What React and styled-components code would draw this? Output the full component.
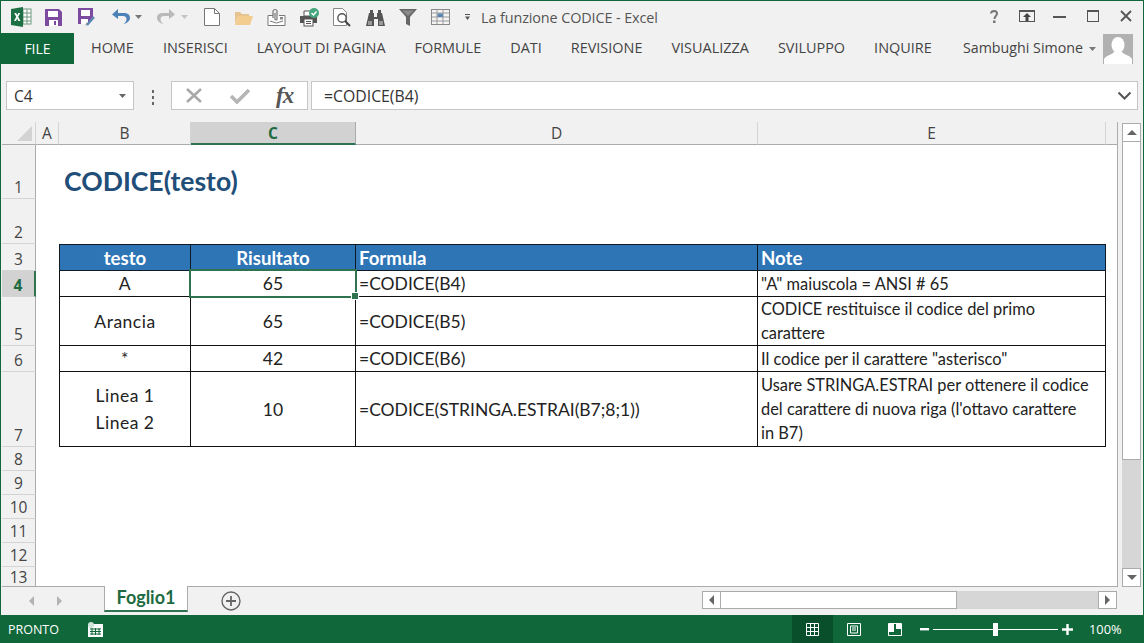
import React from 'react';
import styled, { createGlobalStyle } from 'styled-components';

const Global = createGlobalStyle`
  html, body { margin: 0; padding: 0; width: 1144px; height: 643px; overflow: hidden; background: #f1f1f1; }
  * { box-sizing: border-box; }
`;

const UI = `"Open Sans", "Noto Sans", sans-serif`;
const CELL = `Lato, "Open Sans", sans-serif`;
const GREEN = '#10673a';

const Window = styled.div`
  width: 1144px; height: 643px; display: flex; flex-direction: column;
  border-top: 1px solid ${GREEN}; border-left: 1px solid ${GREEN}; border-right: 1px solid ${GREEN}; padding-left: 1px;
  background: #f1f1f1; overflow: hidden;
  font-family: ${UI}; color: #444;
`;
const TitleBar = styled.div`
  height: 32px; flex: none; display: flex; align-items: center; position: relative;
`;
const Qat = styled.div`display: flex; align-items: center; margin-left: 9px; height: 100%;`;
const QatIcon = styled.svg`
  display: block; flex: none; margin-left: ${p => p.$ml || 0}px; width: ${p => p.width}px; height: ${p => p.height}px;
`;
const Title = styled.div`
  margin-left: 11px; font-size: 14.4px; color: #555; white-space: nowrap; letter-spacing: -0.1px;
`;
const Controls = styled.div`
  margin-left: auto; display: flex; align-items: center; height: 100%; padding-right: 11px; padding-bottom: 2px;
`;
const Ribbon = styled.div`height: 31px; flex: none; display: flex; align-items: center;`;
const FileTab = styled.div`
  width: 73px; margin-left: -1px; height: 31px; background: ${GREEN}; color: #fff; font-size: 14px; display: flex; align-items: center; justify-content: center; flex: none;
`;
const Tabs = styled.div`display: flex; margin-left: 2.5px; padding-bottom: 2px;`;
const Tab = styled.div`
  padding: 0 14.5px; font-size: 14.45px; color: #444; white-space: nowrap;
`;
const User = styled.div`
  margin-left: auto; display: flex; align-items: center; padding-right: 10px; font-size: 14.25px; color: #444;
`;
const UserName = styled.span`padding-bottom: 3px;`;
const Avatar = styled.svg`display: block; margin-left: 7px;`;
const FormulaZone = styled.div`
  height: 58px; flex: none; display: flex; align-items: flex-start; padding: 17px 5px 0 4px;
`;
const NameBox = styled.div`
  width: 128px; height: 29px; background: #fff; border: 1px solid #c6c6c6; display: flex; align-items: center; justify-content: space-between;
  padding: 0 7px; font-size: 15.5px; color: #333;
`;
const Dots = styled.div`
  width: 37px; display: flex; flex-direction: column; align-items: center; gap: 3px;
  span { width: 2px; height: 3px; background: #666; display: block; }
  padding-top: 9px;
`;
const FxBox = styled.div`
  width: 137px; height: 29px; background: #fff; border: 1px solid #c6c6c6; display: flex; align-items: center; padding-left: 13px;
`;
const Fx = styled.span`
  font-family: "Liberation Serif", serif; font-style: italic; font-weight: 700; font-size: 23px; color: #555; margin-left: 26px; letter-spacing: -1px; line-height: 1;
`;
const FormulaInput = styled.div`
  flex: 1; margin-left: 3px; height: 29px; background: #fff; border: 1px solid #c6c6c6; display: flex; align-items: center; justify-content: space-between;
  padding: 0 5px 0 12px; font-size: 15.8px; color: #333;
`;
const SheetArea = styled.div`flex: 1; min-height: 0; display: flex;`;
const GridWrap = styled.div`
  width: 1116px; flex: none; overflow: hidden; background: #fff; border-right: 1px solid #ababab; border-bottom: 1px solid #ababab;
  position: relative;
`;
const Sheet = styled.div`
  display: grid; position: relative;
  grid-template-columns: 34px 23px 132px 165px 402px 348px 11px;
  grid-template-rows: 23px 54px 45px 27px 26px 49px 26px 75px repeat(5, 24px) 20px;
  font-family: ${CELL};
`;
const Corner = styled.div`
  background: #f1f1f1; border-bottom: 1px solid #ababab; border-right: 1px solid #d4d4d4; position: relative;
  &::after { content: ''; position: absolute; right: 3px; bottom: 3px; width: 0; height: 0; border-style: solid; border-width: 0 0 15px 15px; border-color: transparent transparent #d3d3d3 transparent; }
`;
const ColHead = styled.div`
  background: ${p => p.$active ? '#d2d2d2' : '#f1f1f1'};
  color: ${p => p.$active ? '#1e6b41' : '#444'};
  font-weight: ${p => p.$active ? 700 : 400};
  font-family: ${UI}; font-size: 15.5px;
  border-bottom: ${p => p.$active ? '2px solid #2f7350' : '1px solid #ababab'};
  border-right: 1px solid ${p => p.$active ? '#ababab' : '#d4d4d4'};
  display: flex; align-items: center; justify-content: center;
`;
const EmptyHead = styled.div`background: #f1f1f1; border-bottom: 1px solid #ababab;`;
const RowHead = styled.div`
  background: ${p => p.$active ? '#d2d2d2' : '#f1f1f1'};
  color: ${p => p.$active ? '#1e6b41' : '#444'};
  font-weight: ${p => p.$active ? 700 : 400};
  font-family: ${UI}; font-size: 15.5px;
  border-bottom: ${p => p.$last ? 'none' : '1px solid #d4d4d4'};
  border-right: ${p => p.$active ? '2px solid #2f7350' : '1px solid #ababab'};
  display: flex; align-items: flex-end; justify-content: center; padding-bottom: ${p => p.$last ? 0 : 1}px; line-height: ${p => p.$last ? 19 : 20}px;
`;
const Cell = styled.div`
  background: #fff;
  min-width: 0;
`;
const Title1 = styled.div`
  grid-column: span 2; background: #fff; display: flex; align-items: center; font-size: 26.6px; font-weight: 700; color: #1f4e79; padding-left: 5px; white-space: nowrap; padding-top: 17px;
`;
const Head = styled.div`
  background: #2e75b6; color: #fff; font-weight: 700; font-size: 18.6px; display: flex; align-items: center;
  justify-content: ${p => p.$left ? 'flex-start' : 'center'}; padding: ${p => p.$left ? '0 0 0 3px' : '0'};
  border: 1px solid #0f1a24; border-left: ${p => p.$first ? '1px solid #0f1a24' : 'none'}; white-space: nowrap;
`;
const Data = styled.div`
  background: #fff; color: #222; font-size: ${p => p.$small ? 16.4 : 17.5}px; line-height: ${p => p.$small ? 24 : 27}px;
  letter-spacing: ${p => p.$wide ? 0.5 : 0}px;
  display: flex; align-items: center; justify-content: ${p => p.$left ? 'flex-start' : 'center'}; text-align: ${p => p.$left ? 'left' : 'center'};
  padding-left: ${p => p.$left ? 3 : 0}px;
  border-bottom: 1px solid #111; border-right: 1px solid #111; border-left: ${p => p.$first ? '1px solid #111' : 'none'};
  white-space: nowrap;
`;
const Selection = styled.div`
  position: absolute; left: 187px; top: 147px; width: 168px; height: 29px; border: 2px solid #2f7350; pointer-events: none;
  &::after { content: ''; position: absolute; right: -4px; bottom: -4px; width: 6px; height: 6px; background: #2f7350; border: 1px solid #fff; }
`;
const VScroll = styled.div`
  flex: 1; display: flex; flex-direction: column; padding: 1px 3px 0 4px; background: #f1f1f1;
`;
const ScrollBtn = styled.div`
  flex: none; background: #fff; border: 1px solid #ababab; display: flex; align-items: center; justify-content: center;
  width: 19px; height: ${p => p.$h ? 18 : 19}px;
`;
const Arrow = styled.span`
  width: 0; height: 0; border-style: solid;
  ${p => p.$dir === 'up' && 'border-width: 0 5px 5px 5px; border-color: transparent transparent #666 transparent;'}
  ${p => p.$dir === 'down' && 'border-width: 5px 5px 0 5px; border-color: #666 transparent transparent transparent;'}
  ${p => p.$dir === 'left' && 'border-width: 5px 5px 5px 0; border-color: transparent #666 transparent transparent;'}
  ${p => p.$dir === 'right' && 'border-width: 5px 0 5px 5px; border-color: transparent transparent transparent #666;'}
`;
const VTrack = styled.div`flex: 1; background: #d6d6d6; min-height: 0;`;
const VThumb = styled.div`height: 318px; background: #fff; border: 1px solid #ababab; border-top: none;`;
const SheetBar = styled.div`
  height: 28px; flex: none; display: flex; align-items: flex-start; position: relative; background: #f1f1f1;
`;
const NavArrows = styled.div`
  width: 102px; height: 100%; display: flex; align-items: center; gap: 23px; padding-left: 27px;
  span { opacity: 0.45; }
`;
const SheetTab = styled.div`
  width: 84px; height: 26px; background: #fff; color: #1e6b41; font-family: ${CELL}; font-weight: 700; font-size: 18px;
  display: flex; align-items: center; justify-content: center; border-left: 1px solid #ababab; border-right: 1px solid #ababab;
  border-bottom: 2px solid #2f7350; padding-bottom: 3px; margin-top: -1px;
`;
const AddArea = styled.div`
  width: 514px; height: 100%; padding-left: 33px; padding-top: 4px;
`;
const HScroll = styled.div`
  width: 415px; height: 28px; display: flex; padding: 4px 0 0 0;
`;
const HTrack = styled.div`
  flex: 1; height: 18px; background: #d6d6d6; display: flex;
`;
const HThumb = styled.div`
  width: 236px; height: 18px; background: #fff; border: 1px solid #ababab; border-left: none;
`;
const Status = styled.div`
  height: 28px; flex: none; background: ${GREEN}; color: #fff; display: flex; align-items: center; font-size: 12.5px; margin-left: -2px; margin-right: -1px;
`;
const Ready = styled.div`margin-left: 8px; width: 80px;`;
const ViewBtn = styled.div`
  width: 41px; height: 28px; display: flex; align-items: center; justify-content: center;
  background: ${p => p.$active ? '#0a4f2b' : 'transparent'};
`;
const StatusRight = styled.div`margin-left: auto; display: flex; align-items: center; height: 100%;`;
const Zoom = styled.div`
  display: flex; align-items: center; margin-left: 5px; position: relative;
`;
const Slider = styled.div`
  width: 125px; height: 1px; background: #fff; margin: 0 4px; position: relative;
`;
const Knob = styled.div`
  position: absolute; left: 60px; top: -6px; width: 5px; height: 13px; background: #fff;
`;
const Percent = styled.div`margin-left: 16px; width: 55px; font-size: 12.8px;`;

const Save = ({ ml }) => (
  <QatIcon $ml={ml} width={17} height={17} viewBox="0 0 17 17">
    <path d="M0 0h14l3 3v14H0z" fill="#7c4b9f" />
    <rect x="3" y="2" width="10" height="6" fill="#fff" />
    <rect x="4" y="11" width="9" height="6" fill="#fff" />
    <rect x="9" y="12" width="2" height="4" fill="#7c4b9f" />
  </QatIcon>
);
const SaveAs = ({ ml }) => (
  <QatIcon $ml={ml} width={18} height={18} viewBox="0 0 18 18">
    <path d="M0 0h15v9l-5 7H0z" fill="#7c4b9f" />
    <rect x="3" y="2" width="9" height="6" fill="#fff" />
    <rect x="3" y="11" width="7" height="5" fill="#fff" />
    <path d="M9 17l7-8" stroke="#5b87b5" strokeWidth="2.4" />
    <path d="M8 17.5l1-3" stroke="#888" strokeWidth="1" />
  </QatIcon>
);
const Undo = ({ ml, color, flip }) => (
  <QatIcon $ml={ml} width={20} height={18} viewBox="0 0 20 18">
    <g transform={flip ? 'translate(20 0) scale(-1 1)' : undefined}>
      <path d="M7 1L1 6.5 7 11V8h5c2.5 0 3.5 1.5 3.5 3 0 2-1 3.6-3 5 3.5-.5 6.5-3 6.5-6.2C19 6.5 16.5 5 13 5H7z" fill={color} />
    </g>
  </QatIcon>
);
const Caret = ({ ml, color }) => (
  <QatIcon $ml={ml} width={7} height={4} viewBox="0 0 7 4"><path d="M0 0h7L3.5 4z" fill={color} /></QatIcon>
);

export default function App() {
  const rows = [
    ['A', '65', '=CODICE(B4)', '"A" maiuscola = ANSI # 65'],
    ['Arancia', '65', '=CODICE(B5)', <>CODICE restituisce il codice del primo<br />carattere</>],
    ['*', '42', '=CODICE(B6)', 'Il codice per il carattere "asterisco"'],
    [<>Linea 1<br />Linea 2</>, '10', '=CODICE(STRINGA.ESTRAI(B7;8;1))', <>Usare STRINGA.ESTRAI per ottenere il codice<br />del carattere di nuova riga (l'ottavo carattere<br />in B7)</>],
  ];
  return (
    <>
      <Global />
      <Window>
        <TitleBar>
          <Qat>
            <QatIcon width={21} height={20} viewBox="0 0 21 20">
              <rect x="8" y="2" width="12" height="15" fill="#fff" stroke="#6f9a80" />
              <path d="M12 2v15M16 2v15M8 6h12M8 10h12M8 14h12" stroke="#6f9a80" strokeWidth="1" />
              <path d="M0 2l12-2v20L0 18z" fill="#1d7044" />
              <path d="M3.2 6h2l1 2.3L7.3 6h2L7.2 9.8 9.4 14h-2l-1.2-2.6L5 14H3l2.2-4.2z" fill="#fff" />
            </QatIcon>
            <Save ml={13} />
            <SaveAs ml={16} />
            <Undo ml={15} color="#4d82b8" />
            <Caret ml={4} color="#777" />
            <Undo ml={14} color="#b9b9b9" flip />
            <Caret ml={5} color="#c4c4c4" />
            <QatIcon $ml={16} width={16} height={18} viewBox="0 0 16 18">
              <path d="M.5.5h10l5 5v12H.5z" fill="#fff" stroke="#777" />
              <path d="M10.5.5v5h5" fill="none" stroke="#777" />
            </QatIcon>
            <QatIcon $ml={14} width={19} height={15} viewBox="0 0 19 15">
              <path d="M1 2h5l2 2h7v2H4L1 14z" fill="#e6c48f" />
              <path d="M4 6h15l-3 9H1z" fill="#f3cd8f" />
            </QatIcon>
            <QatIcon $ml={14} width={19} height={19} viewBox="0 0 19 19">
              <path d="M1 7.500h5M12 7.500h6v10H1v-10" fill="#fff" stroke="#777" />
              <path d="M6 10V3.500a2 2 0 014 0V11a1 1 0 01-2 0V5" fill="none" stroke="#777" strokeWidth="1.2" />
              <path d="M3 13l6.500 2 6.500-2" fill="none" stroke="#777" />
              <rect x="13" y="9" width="3" height="2.500" fill="#888" />
            </QatIcon>
            <QatIcon $ml={14} width={20} height={19} viewBox="0 0 20 19">
              <path d="M4 3h7v5H4z" fill="#fff" stroke="#555" />
              <path d="M0 8h17v7H0z" fill="#555" />
              <rect x="4" y="11" width="9" height="7" fill="#fff" stroke="#555" />
              <path d="M6 13.500h5M6 15.500h5" stroke="#555" />
              <circle cx="14" cy="5" r="5" fill="#46a77e" />
              <path d="M11.500 5l2 2 3-3.500" fill="none" stroke="#fff" strokeWidth="1.4" />
            </QatIcon>
            <QatIcon $ml={13} width={18} height={19} viewBox="0 0 18 19">
              <path d="M.5.500h9l4 4v13H.5z" fill="#fff" stroke="#888" />
              <circle cx="9" cy="10" r="4.200" fill="#fff" stroke="#555" strokeWidth="1.4" />
              <path d="M12 13l5 5" stroke="#444" strokeWidth="2" />
            </QatIcon>
            <QatIcon $ml={15} width={19} height={17} viewBox="0 0 19 17">
              <path d="M4 1h3v3H4zM12 1h3v3h-3z" fill="#555" />
              <path d="M3 4h5v4h3V4h5l3 13h-7V10H8v7H0z" fill="#555" />
              <path d="M2 12h4v4H2zM13 12h4v4h-4z" fill="#999" />
            </QatIcon>
            <QatIcon $ml={14} width={18} height={17} viewBox="0 0 18 17">
              <path d="M0 0h18l-7 8v9l-4-2V8z" fill="#666" />
              <path d="M3 1.500h12L9 7z" fill="#8b8b8b" />
            </QatIcon>
            <QatIcon $ml={14} width={19} height={16} viewBox="0 0 19 16">
              <rect x=".5" y=".5" width="18" height="15" fill="#f4f4f4" stroke="#888" />
              <path d="M.5 4h18M.5 8h18M.5 12h18M6 .5v15M12 .5v15" stroke="#9a9a9a" />
              <rect x="6.500" y="4.500" width="5.500" height="3.500" fill="#5b87b5" />
            </QatIcon>
            <QatIcon $ml={15} width={5} height={6} viewBox="0 0 5 6">
              <path d="M0 0h5v1H0zM0 2.500h5L2.500 6z" fill="#555" />
            </QatIcon>
          </Qat>
          <Title>La funzione CODICE - Excel</Title>
          <Controls>
            <QatIcon width={8} height={13} viewBox="0 0 8 13">
              <path d="M1 3.500C1.200 1.800 2.500 1 4 1c1.800 0 3 1 3 2.600C7 5.800 4.500 6 4.500 9" fill="none" stroke="#777" strokeWidth="2" />
              <rect x="3" y="10.500" width="2.500" height="2.500" fill="#777" />
            </QatIcon>
            <QatIcon $ml={21} width={16} height={12} viewBox="0 0 16 12">
              <rect x=".5" y=".5" width="15" height="11" fill="none" stroke="#555" />
              <path d="M1 1.500h14" stroke="#555" />
              <path d="M8 3l4 4H9.500v4h-3V7H4z" fill="#444" />
            </QatIcon>
            <QatIcon $ml={18} width={13} height={3} viewBox="0 0 13 3"><rect width="13" height="2" y="1" fill="#555" /></QatIcon>
            <QatIcon $ml={21} width={12} height={12} viewBox="0 0 12 12">
              <rect x=".5" y=".5" width="11" height="11" fill="none" stroke="#555" />
              <rect x="0" y="0" width="12" height="2" fill="#555" />
            </QatIcon>
            <QatIcon $ml={21} width={12} height={12} viewBox="0 0 12 12">
              <path d="M1 1l10 10M11 1L1 11" stroke="#555" strokeWidth="1.800" />
            </QatIcon>
          </Controls>
        </TitleBar>
        <Ribbon>
          <FileTab>FILE</FileTab>
          <Tabs>
            {['HOME', 'INSERISCI', 'LAYOUT DI PAGINA', 'FORMULE', 'DATI', 'REVISIONE', 'VISUALIZZA', 'SVILUPPO', 'INQUIRE'].map(t => <Tab key={t}>{t}</Tab>)}
          </Tabs>
          <User>
            <UserName>Sambughi Simone</UserName>
            <Caret ml={6} color="#777" />
            <Avatar width={30} height={30} viewBox="0 0 30 30">
              <rect width="30" height="30" fill="#b1b1b1" />
              <ellipse cx="15" cy="11" rx="6.500" ry="8" fill="#fff" />
              <path d="M1 30v-5c2-4 8-4 10-7h8c2 3 8 3 10 7v5z" fill="#fff" />
            </Avatar>
          </User>
        </Ribbon>
        <FormulaZone>
          <NameBox>C4<Caret color="#666" /></NameBox>
          <Dots><span /><span /><span /></Dots>
          <FxBox>
            <QatIcon width={19} height={17} viewBox="0 0 19 17">
              <path d="M2 2l14 13M16 2L2 15" stroke="#a9a9a9" strokeWidth="2.600" />
            </QatIcon>
            <QatIcon $ml={26} width={20} height={17} viewBox="0 0 20 17">
              <path d="M1 9l6 6L19 3" fill="none" stroke="#b5b5b5" strokeWidth="3.600" />
            </QatIcon>
            <Fx>fx</Fx>
          </FxBox>
          <FormulaInput>=CODICE(B4)
            <QatIcon width={15} height={9} viewBox="0 0 15 9">
              <path d="M1.500 1.500l6 6 6-6" fill="none" stroke="#555" strokeWidth="2" />
            </QatIcon>
          </FormulaInput>
        </FormulaZone>
        <SheetArea>
          <GridWrap>
            <Sheet>
              <Corner />
              <ColHead>A</ColHead>
              <ColHead>B</ColHead>
              <ColHead $active>C</ColHead>
              <ColHead>D</ColHead>
              <ColHead>E</ColHead>
              <EmptyHead />

              <RowHead>1</RowHead>
              <Cell />
              <Title1>CODICE(testo)</Title1>
              <Cell /><Cell /><Cell />

              <RowHead>2</RowHead>
              <Cell /><Cell /><Cell /><Cell /><Cell /><Cell />

              <RowHead>3</RowHead>
              <Cell />
              <Head $first>testo</Head>
              <Head>Risultato</Head>
              <Head $left>Formula</Head>
              <Head $left>Note</Head>
              <Cell />

              {rows.map((r, i) => (
                <React.Fragment key={i}>
                  <RowHead $active={i === 0}>{i + 4}</RowHead>
                  <Cell />
                  <Data $first $wide>{r[0]}</Data>
                  <Data>{r[1]}</Data>
                  <Data $left>{r[2]}</Data>
                  <Data $left $small>{r[3]}</Data>
                  <Cell />
                </React.Fragment>
              ))}

              {[8, 9, 10, 11, 12, 13].map(n => (
                <React.Fragment key={n}>
                  <RowHead $last={n === 13}>{n}</RowHead>
                  <Cell /><Cell /><Cell /><Cell /><Cell /><Cell />
                </React.Fragment>
              ))}
              <Selection />
            </Sheet>
          </GridWrap>
          <VScroll>
            <ScrollBtn><Arrow $dir="up" /></ScrollBtn>
            <VTrack><VThumb /></VTrack>
            <ScrollBtn><Arrow $dir="down" /></ScrollBtn>
          </VScroll>
        </SheetArea>
        <SheetBar>
          <NavArrows><Arrow $dir="left" /><Arrow $dir="right" /></NavArrows>
          <SheetTab>Foglio1</SheetTab>
          <AddArea>
            <QatIcon width={20} height={20} viewBox="0 0 20 20">
              <circle cx="10" cy="10" r="9" fill="none" stroke="#666" strokeWidth="1.400" />
              <path d="M10 5v10M5 10h10" stroke="#666" strokeWidth="1.800" />
            </QatIcon>
          </AddArea>
          <HScroll>
            <ScrollBtn $h><Arrow $dir="left" /></ScrollBtn>
            <HTrack><HThumb /></HTrack>
            <ScrollBtn $h><Arrow $dir="right" /></ScrollBtn>
          </HScroll>
        </SheetBar>
        <Status>
          <Ready>PRONTO</Ready>
          <QatIcon width={15} height={15} viewBox="0 0 15 15">
            <path d="M0 2h15v13H0z" fill="#fff" />
            <path d="M2 7h11M2 9.500h11M2 12h11M4 6v7M7.500 6v7M11 6v7" stroke={GREEN} />
            <circle cx="3" cy="3" r="3" fill="#cfe3d6" />
          </QatIcon>
          <StatusRight>
            <ViewBtn $active>
              <QatIcon width={13} height={13} viewBox="0 0 13 13">
                <path d="M.5.5h12v12H.5zM.5 4.500h12M.5 8.500h12M4.500.5v12M8.500.5v12" fill="none" stroke="#fff" />
              </QatIcon>
            </ViewBtn>
            <ViewBtn>
              <QatIcon width={14} height={13} viewBox="0 0 14 13">
                <path d="M.5.5h13v12H.5z" fill="none" stroke="#fff" />
                <path d="M3.500 3h7v7h-7zM5 5h4M5 7h4" fill="none" stroke="#fff" />
              </QatIcon>
            </ViewBtn>
            <ViewBtn>
              <QatIcon width={14} height={13} viewBox="0 0 14 13">
                <path d="M.5.5h13v12H.5z" fill="none" stroke="#fff" />
                <path d="M1 1h5v8H1zM8 1h5v5H8z" fill="#fff" />
              </QatIcon>
            </ViewBtn>
            <Zoom>
              <QatIcon width={9} height={3} viewBox="0 0 9 3"><rect width="9" height="2.400" fill="#fff" /></QatIcon>
              <Slider><Knob /></Slider>
              <QatIcon width={11} height={11} viewBox="0 0 11 11"><path d="M5.500 0v11M0 5.500h11" stroke="#fff" strokeWidth="2.400" /></QatIcon>
            </Zoom>
            <Percent>100%</Percent>
          </StatusRight>
        </Status>
      </Window>
    </>
  );
}
